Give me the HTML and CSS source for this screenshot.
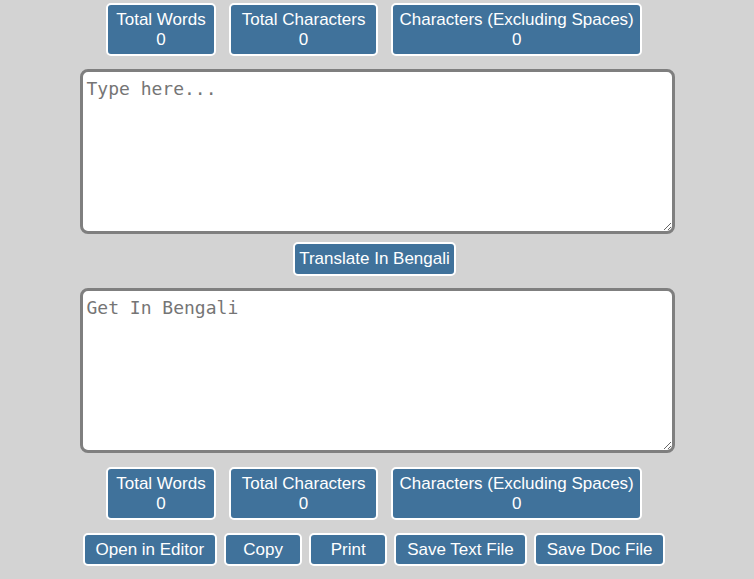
FILE: index.html
```html
<!DOCTYPE html>
<html lang="en">
<head>
  <meta charset="UTF-8" />
  <meta name="viewport" content="width=device-width, initial-scale=1.0"/>
  <title>Bengali Translator</title>
  <link rel="stylesheet" href="styles.css">
</head>
<body>

  <div class="page">
    <div class="stats">
      <div class="stat">Total Words<br><span id="words-in">0</span></div>
      <div class="stat stat-wide">Total Characters<br><span id="chars-in">0</span></div>
      <div class="stat stat-long">Characters (Excluding Spaces)<br><span id="nospace-in">0</span></div>
    </div>

    <textarea id="input" class="text-box" placeholder="Type here..."></textarea>

    <button class="btn btn-translate">Translate In Bengali</button>

    <textarea id="output" class="text-box" placeholder="Get In Bengali"></textarea>

    <div class="stats">
      <div class="stat">Total Words<br><span id="words-out">0</span></div>
      <div class="stat stat-wide">Total Characters<br><span id="chars-out">0</span></div>
      <div class="stat stat-long">Characters (Excluding Spaces)<br><span id="nospace-out">0</span></div>
    </div>

    <div class="actions">
      <button class="btn">Open in Editor</button>
      <button class="btn">Copy</button>
      <button class="btn">Print</button>
      <button class="btn">Save Text File</button>
      <button class="btn">Save Doc File</button>
    </div>
  </div>

</body>
</html>
```

FILE: styles.css
```css
body {
  font-family: "Liberation Sans", Arial, sans-serif;
  background-color: #d3d3d3;
  margin: 0;
  padding: 0;
}

.page {
  display: flex;
  flex-direction: column;
  align-items: center;
  padding-top: 3px;
}

.stats {
  display: flex;
  gap: 13px;
  margin-bottom: 13px;
  margin-right: 6px;
}

.stat {
  background-color: #40729b;
  color: white;
  border: 2px solid white;
  border-radius: 5px;
  padding: 5px 8px 4px;
  font-size: 17px;
  line-height: 20px;
  text-align: center;
}

.stat-wide {
  padding-left: 11px;
  padding-right: 11px;
}

.stat-long {
  padding-left: 6px;
  padding-right: 6px;
}

.text-box {
  width: 595px;
  height: 165px;
  box-sizing: border-box;
  border: 3px solid #7f7f7f;
  border-radius: 8px;
  padding: 6px 4px 3px 4px;
  font-family: "DejaVu Sans Mono", monospace;
  font-size: 18px;
  background-color: white;
  margin: 0 0 8px 0;
}

.text-box::placeholder {
  color: #757575;
}

#output {
  margin-bottom: 14px;
}

.btn {
  font-family: "Liberation Sans", Arial, sans-serif;
  background-color: #40729b;
  color: white;
  border: 2px solid white;
  border-radius: 5px;
  padding: 5px 11px;
  font-size: 17px;
  line-height: 19px;
  min-width: 78px;
  box-sizing: border-box;
  cursor: pointer;
}

.btn-translate {
  padding: 6px 4px;
  line-height: 18px;
  margin-bottom: 12px;
  margin-right: 5px;
}

.actions {
  display: flex;
  gap: 7px;
  margin-right: 6px;
}
```
